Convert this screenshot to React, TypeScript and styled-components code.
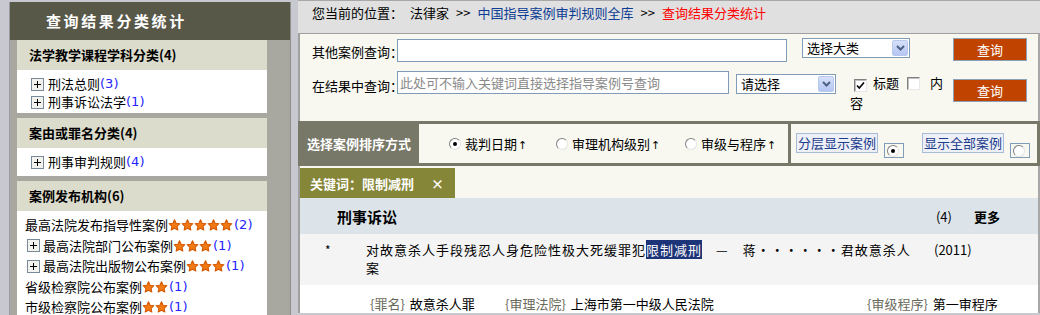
import React from "react";
import styled, { createGlobalStyle } from "styled-components";

const Global = createGlobalStyle`
  html, body { margin: 0; padding: 0; background: #c8c8d0; }
  body { font-family: "Noto Sans CJK SC", "Noto Sans", sans-serif; }
  * { box-sizing: border-box; }
`;

const Page = styled.div`
  display: flex;
  align-items: flex-start;
  width: 1040px;
  height: 315px;
  overflow: hidden;
  background: #c8c8d0;
  padding-left: 9px;
  font-size: 13px;
  color: #000;
`;

/* ---------- left column ---------- */
const LeftCol = styled.aside`
  flex: none;
  width: 282px;
  height: 313px;
  margin-top: 2px;
  background: #a8a8a0;
  border-left: 1px solid #9a9aa2;
  border-right: 1px solid #909088;
  overflow: hidden;
`;

const LeftHeader = styled.div`
  height: 38px;
  line-height: 38px;
  background: #585848;
  color: #fff;
  font-weight: bold;
  font-size: 15px;
  letter-spacing: 2.6px;
  padding-left: 36px;
`;

const Section = styled.section`
  margin: 0 23px 5px 7px;
`;

const SectionHead = styled.div`
  height: 30px;
  line-height: 30px;
  background: #dcdccc;
  padding-left: 12px;
  font-weight: bold;
  font-size: 13px;
`;

const SectionBody = styled.div<{ $pt: number; $pb: number; $pl: number }>`
  background: #fff;
  padding: ${(p) => p.$pt}px 0 ${(p) => p.$pb}px ${(p) => p.$pl}px;
`;

const TreeItem = styled.div<{ $h: number; $indent?: number }>`
  display: flex;
  align-items: center;
  height: ${(p) => p.$h}px;
  line-height: ${(p) => p.$h}px;
  padding-left: ${(p) => p.$indent || 0}px;
  white-space: nowrap;
`;

const PlusWrap = styled.span<{ $gap: number }>`
  display: inline-flex;
  margin-right: ${(p) => p.$gap}px;
`;

const Count = styled.span`
  color: #2424ff;
  font-family: "DejaVu Sans", sans-serif;
  font-size: 13px;
`;

const Stars = styled.span`
  display: inline-flex;
  align-items: center;
  margin-right: 1px;
`;

/* ---------- right column ---------- */
const RightCol = styled.main`
  flex: none;
  width: 742px;
  height: 313px;
  margin-left: 7px;
  display: flex;
  flex-direction: column;
  overflow: hidden;
`;

const Breadcrumb = styled.nav`
  flex: none;
  height: 33px;
  background: #e0e0e0;
  border-top: 1px solid #a8a8a8;
  display: flex;
  align-items: flex-start;
  gap: 7px;
  padding: 3px 0 0 14px;
  line-height: 18px;
`;

const Crumb = styled.span<{ $tone?: "link" | "current" }>`
  color: ${(p) => (p.$tone === "link" ? "#0c3c94" : p.$tone === "current" ? "#ff0000" : "#000")};
`;

const Content = styled.div`
  flex: 1;
  display: flex;
  flex-direction: column;
  background: #f8f8f0;
  border-left: 2px solid #a0a0a0;
  border-top: 1px solid #a0a0a0;
  border-right: 2px solid #a8a8a8;
`;

const SearchForm = styled.form`
  height: 87px;
  padding: 4px 0 0 12px;
  margin: 0;
`;

const FormRow = styled.div<{ $mt?: number }>`
  display: flex;
  align-items: flex-start;
  margin-top: ${(p) => p.$mt || 0}px;
`;

const Label = styled.label<{ $pt: number }>`
  width: 85px;
  flex: none;
  line-height: 23px;
  padding-top: ${(p) => p.$pt}px;
  white-space: nowrap;
`;

const TextInput = styled.input<{ $w: number; $mt?: number }>`
  width: ${(p) => p.$w}px;
  height: 23px;
  flex: none;
  margin: ${(p) => p.$mt || 0}px 0 0 0;
  border: 1px solid #7f9db9;
  background: #fff;
  padding: 0 2px;
  font-family: "Noto Sans CJK SC", sans-serif;
  font-size: 13px;
  outline: none;
  &::placeholder { color: #8a8a8a; }
`;

const SelectBox = styled.div<{ $w: number; $ml: number; $mt?: number }>`
  flex: none;
  width: ${(p) => p.$w}px;
  height: 20px;
  margin: ${(p) => p.$mt || 0}px 0 0 ${(p) => p.$ml}px;
  border: 1px solid #7f9db9;
  background: #fff;
  display: flex;
  align-items: center;
  justify-content: space-between;
  padding: 0 1px 0 4px;
  line-height: 18px;
`;

const SelectArrow = styled.span`
  width: 16px;
  height: 16px;
  border: 1px solid #b8c8ec;
  border-radius: 2px;
  background: linear-gradient(#d6e0fa, #b4c6f2);
  display: flex;
  align-items: center;
  justify-content: center;
`;

const SearchButton = styled.button<{ $ml: number; $mt?: number }>`
  flex: none;
  width: 74px;
  height: 23px;
  margin: ${(p) => p.$mt || 0}px 0 0 ${(p) => p.$ml}px;
  padding: 0;
  background: #c04400;
  border: 1px solid #8aa0b8;
  color: #fff;
  font-family: "Noto Sans CJK SC", sans-serif;
  font-size: 13px;
  line-height: 20px;
`;

const CheckBlock = styled.div`
  flex: none;
  width: 100px;
  margin: 2px 0 0 14px;
  line-height: 20px;
`;

const CheckBox = styled.span<{ $ml: number; $mr: number }>`
  display: inline-flex;
  align-items: center;
  justify-content: center;
  width: 13px;
  height: 13px;
  vertical-align: -2px;
  margin: 0 ${(p) => p.$mr}px 0 ${(p) => p.$ml}px;
  background: #fff;
  border: 1px solid;
  border-color: #808080 #e8e8e8 #e8e8e8 #808080;
  box-shadow: inset 1px 1px 0 #c0c0c0;
`;

const SortBar = styled.div`
  flex: none;
  height: 45px;
  margin: 0 -2px;
  display: flex;
  border: 3px solid #787868;
  background: #f8f8f0;
`;

const SortLabel = styled.div`
  width: 118px;
  flex: none;
  background: #787868;
  color: #fff;
  font-weight: bold;
  display: flex;
  align-items: center;
  padding-left: 6px;
`;

const SortOptions = styled.div`
  width: 369px;
  flex: none;
  display: grid;
  grid-template-columns: 107px 129px auto;
  align-items: center;
  padding-left: 30px;
`;

const SortOption = styled.span`
  display: inline-flex;
  align-items: center;
  gap: 4px;
  white-space: nowrap;
`;

const Arrow = styled.span`
  font-family: "DejaVu Sans", sans-serif;
  font-size: 11px;
  margin-left: 1px;
`;

const Radio = styled.span<{ $checked?: boolean }>`
  width: 12px;
  height: 12px;
  flex: none;
  border-radius: 50%;
  border: 1px solid;
  border-color: #808080 #e4e4e4 #e4e4e4 #808080;
  background: #fff;
  display: inline-flex;
  align-items: center;
  justify-content: center;
  &::after {
    content: "";
    width: 4px;
    height: 4px;
    border-radius: 50%;
    background: ${(p) => (p.$checked ? "#000" : "transparent")};
  }
`;

const DisplayCell = styled.div`
  flex: 1;
  display: flex;
  align-items: flex-start;
  border-left: 3px solid #787868;
  padding-left: 5px;
`;

const DisplayButton = styled.span<{ $ml: number }>`
  flex: none;
  width: 82px;
  height: 20px;
  margin: 9px 0 0 ${(p) => p.$ml}px;
  border: 1px solid #a8bcd8;
  background: #eef0f8;
  color: #1c3c8c;
  line-height: 18px;
  text-align: center;
`;

const RadioFrame = styled.span`
  flex: none;
  width: 20px;
  height: 15px;
  margin: 19px 0 0 6px;
  border: 1px solid #7f9db9;
  display: flex;
  align-items: center;
  padding-left: 2px;
`;

const KeywordRow = styled.div`
  flex: none;
  height: 32px;
  padding-top: 2px;
`;

const KeywordTag = styled.div`
  width: 155px;
  height: 30px;
  background: #868638;
  color: #fff;
  font-weight: bold;
  display: flex;
  align-items: center;
  justify-content: space-between;
  padding: 0 11px 0 10px;
`;

const CategoryHead = styled.div`
  flex: none;
  height: 36px;
  background: #dce4ea;
  display: flex;
  align-items: center;
  padding: 0 38px 0 37px;
`;

const CategoryTitle = styled.span`
  font-weight: bold;
  font-size: 15px;
`;

const CategoryMeta = styled.span`
  margin-left: auto;
  display: flex;
  gap: 22px;
`;

const Bold = styled.b`
  font-weight: bold;
`;

const CaseRow = styled.div`
  flex: none;
  display: flex;
  align-items: flex-start;
  background: #f4f4f4;
  padding: 7px 0 8px 25px;
  line-height: 18px;
`;

const Bullet = styled.span`
  width: 41px;
  flex: none;
  font-size: 12px;
`;

const CaseTitle = styled.span`
  width: 553px;
  flex: none;
  letter-spacing: 1px;
`;

const Highlight = styled.span`
  background: #1e3478;
  color: #fff;
`;

const Year = styled.span`
  margin-left: 15px;
`;

const MetaRow = styled.div`
  flex: none;
  height: 30px;
  background: #fff;
  display: grid;
  grid-template-columns: 135px 362px auto;
  padding: 10px 0 0 70px;
  line-height: 18px;
`;

const MetaItem = styled.span`
  display: flex;
  gap: 5px;
  white-space: nowrap;
`;

const MetaLabel = styled.span`
  color: #6a6a5a;
`;

/* ---------- icons ---------- */
const PlusIcon = () => (
  <svg width="13" height="13" viewBox="0 0 13 13">
    <rect x="0.5" y="0.5" width="12" height="12" fill="#f2f2ee" stroke="#7a8a9a" />
    <path d="M3 6.5h7M6.5 3v7" stroke="#000" strokeWidth="1" />
  </svg>
);

const Star = () => (
  <svg width="13" height="12" viewBox="0 0 24 23">
    <path
      d="M12 1.5l3.1 6.6 7.2.9-5.3 5 1.4 7.1L12 17.6l-6.4 3.5 1.4-7.1-5.3-5 7.2-.9z"
      fill="#f27a14"
      stroke="#d45800"
      strokeWidth="2"
      strokeLinejoin="round"
    />
  </svg>
);

const StarRow = ({ n }: { n: number }) => (
  <Stars>
    {Array.from({ length: n }).map((_, i) => (
      <Star key={i} />
    ))}
  </Stars>
);

const Chevron = () => (
  <svg width="9" height="6" viewBox="0 0 9 6">
    <path d="M1 1l3.5 3.5L8 1" stroke="#4d6185" strokeWidth="2" fill="none" />
  </svg>
);

const Check = () => (
  <svg width="9" height="9" viewBox="0 0 9 9">
    <path d="M1 4.5l2.3 2.5L8 1.5" stroke="#000" strokeWidth="1.6" fill="none" />
  </svg>
);

const Tree = ({ label, count, stars, h, plus, gap, indent }: {
  label: string; count: number; stars?: number; h: number; plus?: boolean; gap?: number; indent?: number;
}) => (
  <TreeItem $h={h} $indent={indent}>
    {plus && (
      <PlusWrap $gap={gap ?? 4}>
        <PlusIcon />
      </PlusWrap>
    )}
    <span>{label}</span>
    {stars ? <StarRow n={stars} /> : null}
    <Count>({count})</Count>
  </TreeItem>
);

export default function App() {
  return (
    <Page>
      <Global />
      <LeftCol>
        <LeftHeader>查询结果分类统计</LeftHeader>
        <Section>
          <SectionHead>法学教学课程学科分类(4)</SectionHead>
          <SectionBody $pt={5} $pb={2} $pl={14}>
            <Tree plus h={18} label="刑法总则" count={3} />
            <Tree plus h={18} label="刑事诉讼法学" count={1} />
          </SectionBody>
        </Section>
        <Section>
          <SectionHead>案由或罪名分类(4)</SectionHead>
          <SectionBody $pt={5} $pb={5} $pl={14}>
            <Tree plus h={18} label="刑事审判规则" count={4} />
          </SectionBody>
        </Section>
        <Section>
          <SectionHead>案例发布机构(6)</SectionHead>
          <SectionBody $pt={4} $pb={4} $pl={8}>
            <Tree h={20.5} label="最高法院发布指导性案例" stars={5} count={2} />
            <Tree plus gap={3} indent={2} h={20.5} label="最高法院部门公布案例" stars={3} count={1} />
            <Tree plus gap={3} indent={2} h={20.5} label="最高法院出版物公布案例" stars={3} count={1} />
            <Tree h={20.5} label="省级检察院公布案例" stars={2} count={1} />
            <Tree h={20.5} label="市级检察院公布案例" stars={2} count={1} />
          </SectionBody>
        </Section>
      </LeftCol>

      <RightCol>
        <Breadcrumb>
          <Crumb>您当前的位置：</Crumb>
          <Crumb>法律家</Crumb>
          <Crumb>&gt;&gt;</Crumb>
          <Crumb $tone="link">中国指导案例审判规则全库</Crumb>
          <Crumb>&gt;&gt;</Crumb>
          <Crumb $tone="current">查询结果分类统计</Crumb>
        </Breadcrumb>

        <Content>
          <SearchForm onSubmit={(e) => e.preventDefault()}>
            <FormRow>
              <Label $pt={2}>其他案例查询：</Label>
              <TextInput $w={390} $mt={1} />
              <SelectBox $w={108} $ml={15}>
                <span>选择大类</span>
                <SelectArrow><Chevron /></SelectArrow>
              </SelectBox>
              <SearchButton type="button" $ml={43}>查询</SearchButton>
            </FormRow>
            <FormRow $mt={8}>
              <Label $pt={3}>在结果中查询：</Label>
              <TextInput $w={332} placeholder="此处可不输入关键词直接选择指导案例号查询" />
              <SelectBox $w={100} $ml={7} $mt={3}>
                <span>请选择</span>
                <SelectArrow><Chevron /></SelectArrow>
              </SelectBox>
              <CheckBlock>
                <CheckBox $ml={4} $mr={6}><Check /></CheckBox>标题
                <CheckBox $ml={8} $mr={10} />内容
              </CheckBlock>
              <SearchButton type="button" $ml={3} $mt={8}>查询</SearchButton>
            </FormRow>
          </SearchForm>

          <SortBar>
            <SortLabel>选择案例排序方式</SortLabel>
            <SortOptions>
              <SortOption><Radio $checked /><span>裁判日期<Arrow>↑</Arrow></span></SortOption>
              <SortOption><Radio /><span>审理机构级别<Arrow>↑</Arrow></span></SortOption>
              <SortOption><Radio /><span>审级与程序<Arrow>↑</Arrow></span></SortOption>
            </SortOptions>
            <DisplayCell>
              <DisplayButton $ml={0}>分层显示案例</DisplayButton>
              <RadioFrame><Radio $checked /></RadioFrame>
              <DisplayButton $ml={18}>显示全部案例</DisplayButton>
              <RadioFrame><Radio /></RadioFrame>
            </DisplayCell>
          </SortBar>

          <KeywordRow>
            <KeywordTag>
              <span>关键词：限制减刑</span>
              <span>×</span>
            </KeywordTag>
          </KeywordRow>

          <CategoryHead>
            <CategoryTitle>刑事诉讼</CategoryTitle>
            <CategoryMeta>
              <span>(4)</span>
              <Bold>更多</Bold>
            </CategoryMeta>
          </CategoryHead>

          <CaseRow>
            <Bullet>*</Bullet>
            <CaseTitle>
              对故意杀人手段残忍人身危险性极大死缓罪犯<Highlight>限制减刑</Highlight>　—　蒋・・・・・・君故意杀人案
            </CaseTitle>
            <Year>(2011)</Year>
          </CaseRow>

          <MetaRow>
            <MetaItem><MetaLabel>{"{罪名}"}</MetaLabel>故意杀人罪</MetaItem>
            <MetaItem><MetaLabel>{"{审理法院}"}</MetaLabel>上海市第一中级人民法院</MetaItem>
            <MetaItem><MetaLabel>{"{审级程序}"}</MetaLabel>第一审程序</MetaItem>
          </MetaRow>
        </Content>
      </RightCol>
    </Page>
  );
}
